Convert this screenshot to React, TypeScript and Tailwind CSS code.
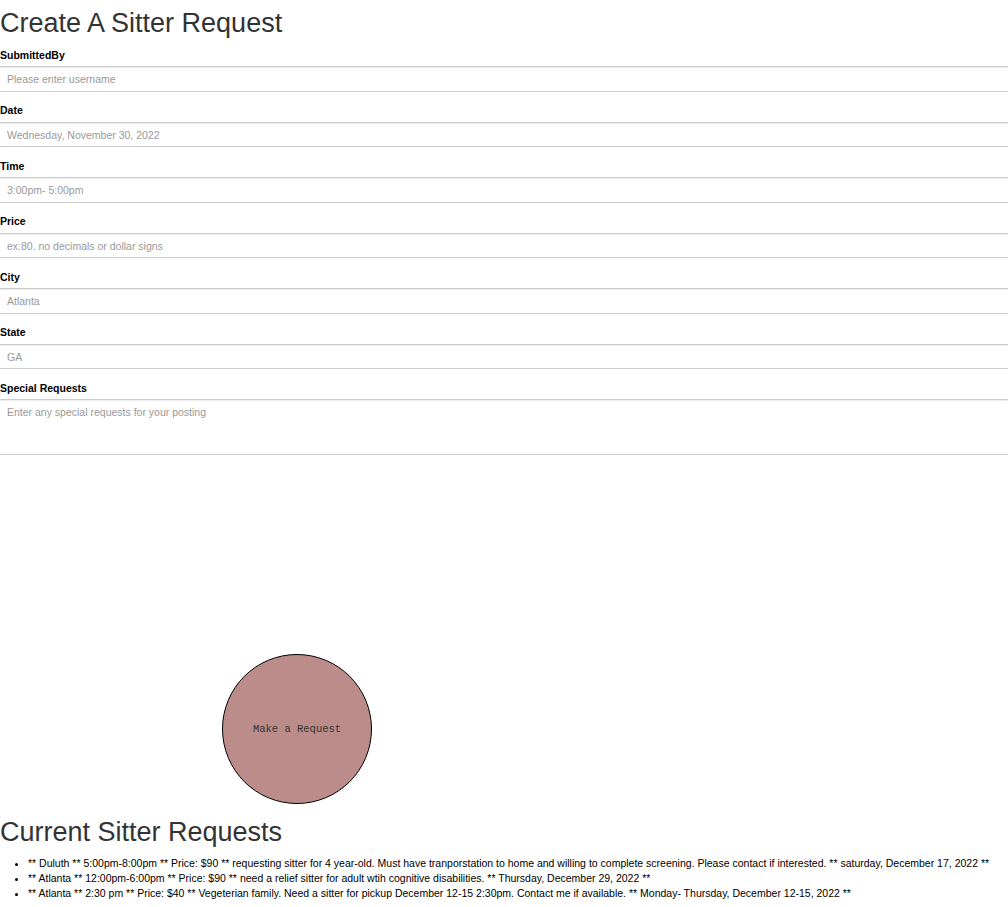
const fields = [
  { label: 'SubmittedBy', placeholder: 'Please enter username' },
  { label: 'Date', placeholder: 'Wednesday, November 30, 2022' },
  { label: 'Time', placeholder: '3:00pm- 5:00pm' },
  { label: 'Price', placeholder: 'ex:80. no decimals or dollar signs' },
  { label: 'City', placeholder: 'Atlanta' },
  { label: 'State', placeholder: 'GA' },
]

const requests = [
  '** Duluth ** 5:00pm-8:00pm ** Price: $90 ** requesting sitter for 4 year-old. Must have tranporstation to home and willing to complete screening. Please contact if interested. ** saturday, December 17, 2022 **',
  '** Atlanta ** 12:00pm-6:00pm ** Price: $90 ** need a relief sitter for adult wtih cognitive disabilities. ** Thursday, December 29, 2022 **',
  '** Atlanta ** 2:30 pm ** Price: $40 ** Vegeterian family. Need a sitter for pickup December 12-15 2:30pm. Contact me if available. ** Monday- Thursday, December 12-15, 2022 **',
]

export default function App() {
  return (
    <div className="min-h-[907px] bg-white font-['Liberation_Sans',Arial,sans-serif] text-[10.5px] leading-[15px] text-[#333]">
      <h1 className="mt-[9px] mb-[9px] text-[27px] leading-[1.1] font-normal">
        Create A Sitter Request
      </h1>
      <form>
        {fields.map((f) => (
          <div key={f.label} className="mb-[11.25px]">
            <label className="mb-[3.75px] block font-bold text-black">{f.label}</label>
            <input
              type="text"
              placeholder={f.placeholder}
              className="block h-[25.5px] w-full border-y border-[#ccc] px-[7px] text-[10.5px] text-[#555] shadow-[inset_0_1px_1px_rgba(0,0,0,0.075)] outline-none placeholder:text-[#999]"
            />
          </div>
        ))}
        <div className="mb-[11.25px]">
          <label className="mb-[3.75px] block font-bold text-black">Special Requests</label>
          <textarea
            placeholder="Enter any special requests for your posting"
            className="block h-[56px] w-full resize-none border-y border-[#ccc] px-[7px] py-[4.5px] text-[10.5px] leading-[15px] text-[#555] shadow-[inset_0_1px_1px_rgba(0,0,0,0.075)] outline-none placeholder:text-[#999]"
          />
        </div>
        <button
          type="button"
          className="mt-[199px] ml-[222px] flex h-[150px] w-[150px] items-center justify-center rounded-full border border-black bg-[#bc8c8a] font-['Liberation_Mono','Courier_New',monospace] text-[10.5px] text-[#333]"
        >
          Make a Request
        </button>
      </form>
      <h2 className="mt-[14px] mb-[8px] text-[27px] leading-[1.1] font-normal">
        Current Sitter Requests
      </h2>
      <ul className="list-disc pl-[28px] text-black">
        {requests.map((r) => (
          <li key={r}>{r}</li>
        ))}
      </ul>
    </div>
  )
}
